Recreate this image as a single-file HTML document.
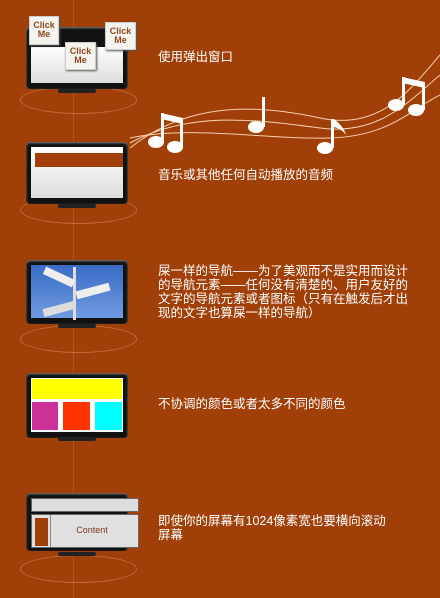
<!DOCTYPE html><html><head><meta charset="utf-8"><style>
body{margin:0;width:440px;height:598px;background:#a03f07;position:relative;overflow:hidden;font-family:"Liberation Sans","Noto Sans CJK SC",sans-serif}
.a{position:absolute}
.t{position:absolute;color:#fff;font-size:12.5px;line-height:14px;left:158px}
.mon{position:absolute;left:26px;width:102px;height:62px;background:#111;border-radius:4px;box-shadow:inset 0 1px 2px #888}
.scr{position:absolute;left:5px;top:5px;right:5px;bottom:6px;background:linear-gradient(#fff,#ddd)}
.stand{position:absolute;left:58px;width:38px;height:4px;background:#222;border-radius:2px}
.ell{position:absolute;left:20px;width:115px;height:26px;border:1px solid rgba(255,190,150,.35);border-radius:50%}
.cm{position:absolute;background:#f5f3ee;border:1px solid #ccc;box-shadow:1px 1px 2px #555;color:#8a4a20;font:bold 9px/9px "Liberation Sans",sans-serif;text-align:center;padding-top:4px;box-sizing:border-box}
</style></head><body>
<div class="a" style="left:73px;top:0;width:1px;height:598px;background:rgba(255,190,150,.18)"></div>

<div class="ell" style="top:86px"></div>
<div class="mon" style="top:27px"><div class="scr" style="top:20px"></div></div>
<div class="stand" style="top:89px"></div>
<div class="cm" style="left:29px;top:16px;width:30px;height:29px">Click<br>Me</div>
<div class="cm" style="left:105px;top:22px;width:31px;height:28px">Click<br>Me</div>
<div class="cm" style="left:65px;top:42px;width:31px;height:28px">Click<br>Me</div>
<div class="t" style="top:50px">使用弹出窗口</div>

<svg class="a" style="left:125px;top:50px" width="315" height="110" viewBox="125 50 315 110">
<g fill="none" stroke="#f3d0b0" stroke-width="1">
<path d="M130 148 C190 100,260 105,320 118 S410 90,440 55"/>
<path d="M130 143 C190 110,260 120,320 128 S410 100,440 75"/>
<path d="M130 138 C190 125,270 140,330 138 S410 110,440 95"/>
</g>
<g fill="#fff">
<ellipse cx="156" cy="142" rx="8" ry="6"/><ellipse cx="175" cy="147" rx="8" ry="6"/>
<rect x="161" y="113" width="3" height="29"/><rect x="180" y="118" width="3" height="29"/>
<polygon points="161,113 183,118 183,124 161,119"/>
<ellipse cx="256" cy="127" rx="8" ry="6"/><rect x="262" y="97" width="3" height="30"/>
<ellipse cx="325" cy="148" rx="8" ry="6"/><rect x="331" y="119" width="3" height="29"/>
<path d="M334 119 q10 8 12 16 q-4 -6 -12 -8z"/>
<ellipse cx="396" cy="105" rx="8" ry="6"/><ellipse cx="416" cy="110" rx="8" ry="6"/>
<rect x="402" y="77" width="3" height="28"/><rect x="422" y="82" width="3" height="28"/>
<polygon points="402,77 425,82 425,88 402,83"/>
</g></svg>

<div class="ell" style="top:196px"></div>
<div class="mon" style="top:142px"><div class="scr"><div class="a" style="left:4px;top:6px;width:88px;height:14px;background:#a03f07"></div></div></div>
<div class="stand" style="top:204px"></div>
<div class="t" style="top:168px">音乐或其他任何自动播放的音频</div>

<div class="ell" style="top:325px"></div>
<div class="mon" style="top:260px;height:64px"><div class="scr" style="background:linear-gradient(#3a6bc5,#6e9be0)">
<div class="a" style="left:42px;top:2px;width:3px;height:53px;background:#ddd"></div>
<div class="a" style="left:12px;top:8px;width:32px;height:8px;background:#eee;transform:rotate(25deg)"></div>
<div class="a" style="left:45px;top:22px;width:34px;height:8px;background:#eee;transform:rotate(-15deg)"></div>
<div class="a" style="left:12px;top:40px;width:32px;height:8px;background:#ddd;transform:rotate(-15deg)"></div>
</div></div>
<div class="stand" style="top:324px"></div>
<div class="t" style="top:264px;width:256px">屎一样的导航——为了美观而不是实用而设计的导航元素——任何没有清楚的、用户友好的文字的导航元素或者图标（只有在触发后才出现的文字也算屎一样的导航）</div>

<div class="mon" style="top:373px;height:65px"><div class="scr" style="background:#fff">
<div class="a" style="left:1px;top:1px;right:1px;height:20px;background:#ffff00"></div>
<div class="a" style="left:1px;top:24px;width:26px;height:28px;background:#cc3399"></div>
<div class="a" style="left:32px;top:24px;width:27px;height:28px;background:#ff3300"></div>
<div class="a" style="left:64px;top:24px;width:27px;height:28px;background:#00ffff"></div>
</div></div>
<div class="stand" style="top:437px"></div>
<div class="t" style="top:397px">不协调的颜色或者太多不同的颜色</div>

<div class="ell" style="top:555px"></div>
<div class="mon" style="top:493px;height:58px"></div>
<div class="a" style="left:31px;top:498px;width:106px;height:12px;background:#ddd;border:1px solid #666"></div>
<div class="a" style="left:31px;top:514px;width:106px;height:32px;background:#e0e0e0;border:1px solid #666">
<div class="a" style="left:3px;top:3px;width:13px;height:28px;background:#a03f07"></div>
<div class="a" style="left:18px;top:0;width:1px;height:32px;background:#888"></div>
<div class="a" style="left:20px;top:10px;width:80px;text-align:center;color:#7a3a1a;font-size:9px">Content</div></div>
<div class="stand" style="top:552px"></div>
<div class="t" style="top:514px">即使你的屏幕有1024像素宽也要横向滚动<br>屏幕</div>
</body></html>
